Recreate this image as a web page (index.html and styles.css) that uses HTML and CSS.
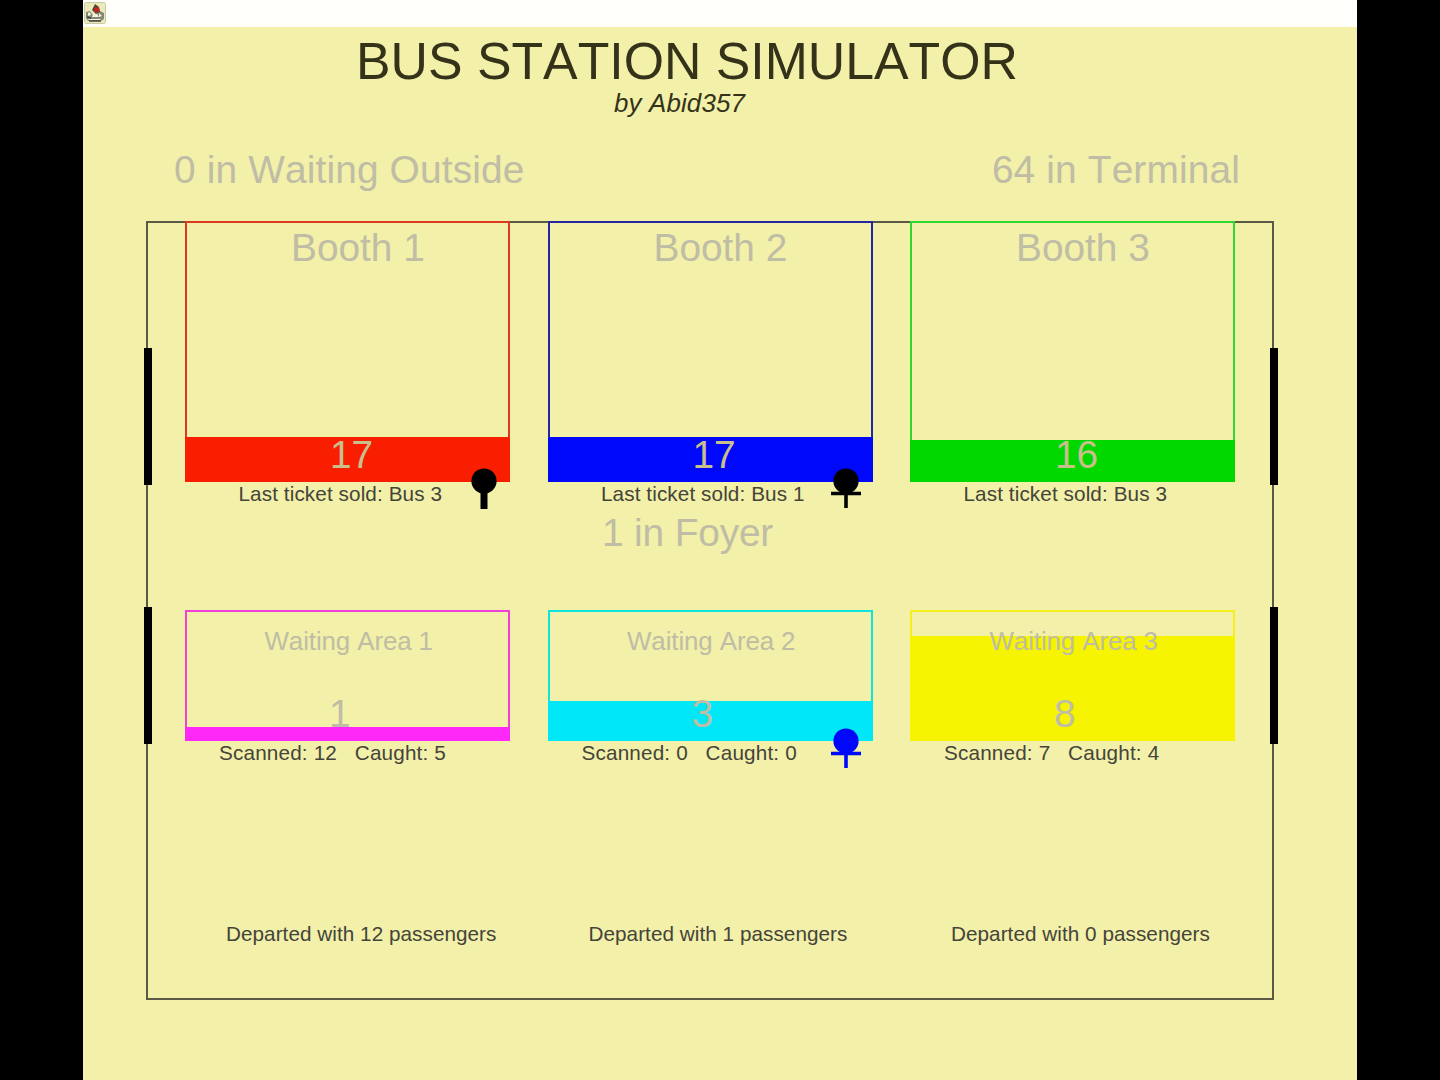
FILE: index.html
```html
<!DOCTYPE html>
<html lang="en">
<head>
<meta charset="utf-8">
<title>Bus Station Simulator</title>
<link rel="stylesheet" href="styles.css">
</head>
<body>
<main class="window">
  <div class="titlebar">
    <svg class="app-icon" viewBox="0 0 22 22" width="22" height="22">
      <rect x=".5" y=".5" width="21" height="21" rx="2" fill="#eceabc" stroke="#c9c8a0"/>
      <path d="M2 10l4-1 3 4h3l4-4 4 2v6l-3 2H4l-2-3z" fill="#85867a"/>
      <path d="M4 11l2-1 1 3-3 1zM9 12h4l2 3H8zM15 11l3 3-3 1zM4 17h13l-1 1H5z" fill="#f6f5d5"/>
      <path d="M8 8l3-6 4 3 1 5-4 2z" fill="#4a4a3c"/>
      <circle cx="12.7" cy="7.8" r="2.7" fill="#c3241c"/>
      <path d="M3 15l4 1M5 19h12" stroke="#44453a" stroke-width="1.3"/>
    </svg>
  </div>
  <h1 class="title">BUS STATION SIMULATOR</h1>
  <p class="author">by Abid357</p>
  <div class="totals">
    <span class="outside">0 in Waiting Outside</span>
    <span>64 in Terminal</span>
  </div>
  <section class="hall">
    <i class="door west upper"></i><i class="door west lower"></i>
    <i class="door east upper"></i><i class="door east lower"></i>
    <div class="row">
      <article class="cell red">
        <div class="box booth"><div class="fill" style="height:45px"></div><span class="name">Booth 1</span><span class="count">17</span></div>
        <p class="note">Last ticket sold: Bus 3</p>
        <svg class="person" viewBox="0 0 32 44" width="32" height="44"><circle cx="16" cy="16" r="12.6"/><path d="M12.5 20h7v25h-7z"/></svg>
      </article>
      <article class="cell blue">
        <div class="box booth"><div class="fill" style="height:45px"></div><span class="name">Booth 2</span><span class="count">17</span></div>
        <p class="note">Last ticket sold: Bus 1</p>
        <svg class="person" viewBox="0 0 32 44" width="32" height="44"><circle cx="16" cy="16" r="12.6"/><path d="M1 26.8h30v3.5H1zM14.2 26h3.6v17h-3.6z"/></svg>
      </article>
      <article class="cell green">
        <div class="box booth"><div class="fill" style="height:42px"></div><span class="name">Booth 3</span><span class="count">16</span></div>
        <p class="note">Last ticket sold: Bus 3</p>
      </article>
    </div>
    <p class="foyer">1 in Foyer</p>
    <div class="row">
      <article class="cell magenta">
        <div class="box area"><div class="fill" style="height:14px"></div><span class="name">Waiting Area 1</span><span class="count">1</span></div>
        <p class="note">Scanned: 12   Caught: 5</p>
      </article>
      <article class="cell cyan">
        <div class="box area"><div class="fill" style="height:40px"></div><span class="name">Waiting Area 2</span><span class="count">3</span></div>
        <p class="note">Scanned: 0   Caught: 0</p>
        <svg class="person agent" viewBox="0 0 32 44" width="32" height="44"><circle cx="16" cy="16" r="12.6"/><path d="M1 26.8h30v3.5H1zM14.2 26h3.6v17h-3.6z"/></svg>
      </article>
      <article class="cell yellow">
        <div class="box area"><div class="fill" style="height:105px"></div><span class="name">Waiting Area 3</span><span class="count">8</span></div>
        <p class="note">Scanned: 7   Caught: 4</p>
      </article>
    </div>
    <div class="row departures">
      <p>Departed with 12 passengers</p>
      <p>Departed with 1 passengers</p>
      <p>Departed with 0 passengers</p>
    </div>
  </section>
</main>
</body>
</html>
```

FILE: styles.css
```css
* { box-sizing: border-box; }

body {
  margin: 0;
  height: 1080px;
  overflow: hidden;
  display: flex;
  justify-content: center;
  background: #000;
  color: #45443a;
  font: 20.7px/24px "Liberation Sans", Arial, sans-serif;
  font-kerning: none;
}

h1, p { margin: 0; }

.window {
  width: 1274px;
  height: 1080px;
  background: #f2f0a9;
}

.titlebar {
  height: 27px;
  padding: 2px 1px;
  background: #fffffc;
}

.app-icon { display: block; }

.title {
  margin: 6px 0 0 273px;
  font-size: 51.8px;
  line-height: 56px;
  font-weight: 400;
  color: #34331a;
}

.author {
  margin-left: 531px;
  font-size: 25.9px;
  line-height: 28px;
  letter-spacing: .15px;
  font-style: italic;
  color: #34331a;
}

.totals {
  display: flex;
  justify-content: space-between;
  margin: 31px 117px 29px 91px;
  font-size: 38.85px;
  line-height: 44px;
  letter-spacing: .15px;
  color: #bfbda5;
}

.hall {
  position: relative;
  width: 1128px;
  height: 779px;
  margin-left: 63px;
  border: 2px solid #5a5945;
}

.door {
  position: absolute;
  width: 8px;
  height: 137px;
  background: #000;
}
.west { left: -4.5px; }
.east { right: -5.5px; }
.upper { top: 125px; }
.lower { top: 384px; }

.row {
  display: grid;
  grid-template-columns: repeat(3, 325px);
  column-gap: 37.5px;
  margin-left: 37px;
}
.row:first-of-type { margin-top: -2px; }

.cell { position: relative; }

.red { --tone: #fa1e00; --edge: #dc3a20; }
.blue { --tone: #0008fa; --edge: #2625a0; }
.green { --tone: #00d800; --edge: #32d832; }
.magenta { --tone: #ff28f8; --edge: #f040d8; }
.cyan { --tone: #00e8f8; --edge: #10e4da; }
.yellow { --tone: #f6f400; --edge: #f4f020; }

.box {
  display: flex;
  flex-direction: column;
  position: relative;
  border: 2px solid var(--edge);
  color: #bfbda5;
  font-size: 38.85px;
  line-height: 44px;
}

/* The fill level rises behind the labels and covers the frame. */
.fill {
  position: absolute;
  left: -2px;
  right: -2px;
  bottom: -2px;
  background: var(--tone);
}

.name, .count { position: relative; }

.booth { height: 261px; padding-top: 3px; }
.booth .name { margin-left: 104px; }
.booth .count { margin: 163px 0 0 143px; color: #c8bf8d; }
.booth + .note { margin-left: 53.5px; }

.area { height: 131px; padding-top: 15px; }
.area .name {
  margin-left: 77.5px;
  font-size: 25.9px;
  line-height: 28px;
  letter-spacing: -.1px;
}
.area .count { margin: 37px 0 0 142px; }
.area + .note { margin-left: 34px; letter-spacing: .17px; }

.note { white-space: pre; letter-spacing: .1px; }

.person {
  position: absolute;
  left: 282.5px;
  top: 244px;
}
.agent { top: 115px; fill: #0008fa; }

.foyer {
  margin: 5px 0 55px 454px;
  font-size: 38.85px;
  line-height: 44px;
  letter-spacing: -.15px;
  color: #bfbda5;
}

.departures { margin-top: 157px; }
.departures p { padding-left: 41px; letter-spacing: .05px; }
```
